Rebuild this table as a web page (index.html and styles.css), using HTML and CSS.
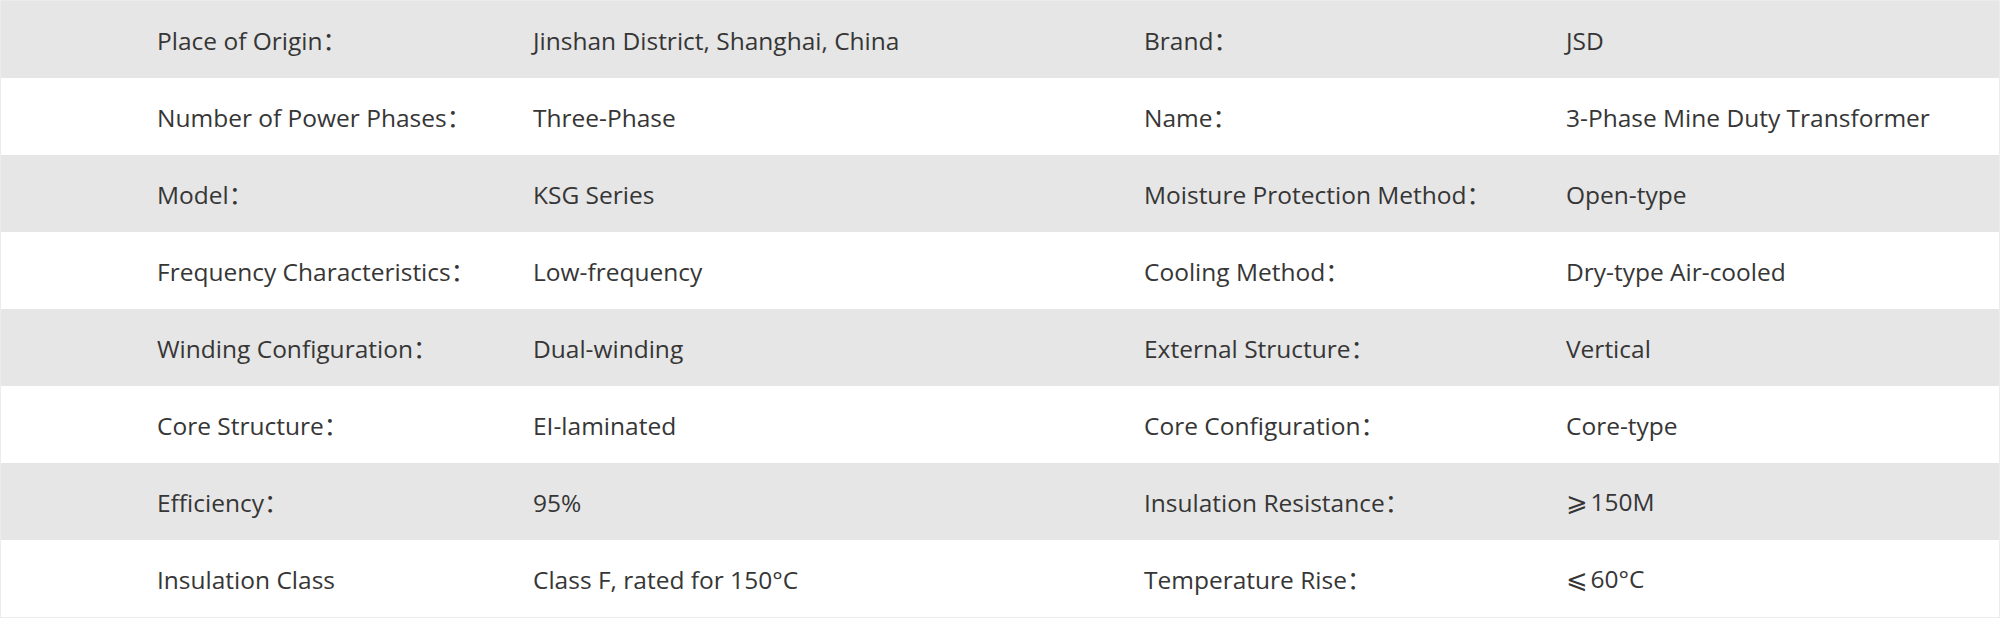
FILE: index.html
```html
<!DOCTYPE html>
<html lang="en">
<head>
<meta charset="utf-8">
<title>Specifications</title>
<link rel="stylesheet" href="styles.css">
</head>
<body>
<div class="specs">
  <div class="row alt">
    <div class="cell label first">Place of Origin：</div>
    <div class="cell">Jinshan District, Shanghai, China</div>
    <div class="cell label">Brand：</div>
    <div class="cell">JSD</div>
  </div>
  <div class="row">
    <div class="cell label first">Number of Power Phases：</div>
    <div class="cell">Three-Phase</div>
    <div class="cell label">Name：</div>
    <div class="cell">3-Phase Mine Duty Transformer</div>
  </div>
  <div class="row alt">
    <div class="cell label first">Model：</div>
    <div class="cell">KSG Series</div>
    <div class="cell label">Moisture Protection Method：</div>
    <div class="cell">Open-type</div>
  </div>
  <div class="row">
    <div class="cell label first">Frequency Characteristics：</div>
    <div class="cell">Low-frequency</div>
    <div class="cell label">Cooling Method：</div>
    <div class="cell">Dry-type Air-cooled</div>
  </div>
  <div class="row alt">
    <div class="cell label first">Winding Configuration：</div>
    <div class="cell">Dual-winding</div>
    <div class="cell label">External Structure：</div>
    <div class="cell">Vertical</div>
  </div>
  <div class="row">
    <div class="cell label first">Core Structure：</div>
    <div class="cell">EI-laminated</div>
    <div class="cell label">Core Configuration：</div>
    <div class="cell">Core-type</div>
  </div>
  <div class="row alt">
    <div class="cell label first">Efficiency：</div>
    <div class="cell">95%</div>
    <div class="cell label">Insulation Resistance：</div>
    <div class="cell"><span class="sym">⩾</span>150M</div>
  </div>
  <div class="row">
    <div class="cell label first">Insulation Class</div>
    <div class="cell">Class F, rated for 150°C</div>
    <div class="cell label">Temperature Rise：</div>
    <div class="cell"><span class="sym">⩽</span>60°C</div>
  </div>
</div>
</body>
</html>
```

FILE: styles.css
```css
html, body {
  margin: 0;
  padding: 0;
  background: #ffffff;
}

body {
  font-family: "Open Sans", "Noto Sans", "Noto Sans CJK SC", sans-serif;
  font-size: 24.5px;
  color: #363636;
}

.specs {
  width: 1998px;
  border: 1px solid #ececec;
}

.row {
  display: grid;
  grid-template-columns: 532px 611px 422px 1fr;
  align-items: center;
  height: 77px;
  background: #ffffff;
}

.row.alt {
  background: #e6e6e6;
}

.cell {
  white-space: nowrap;
  line-height: 1.2;
  padding-top: 2px;
}

.cell.first {
  padding-left: 156px;
}

.sym {
  font-family: "DejaVu Sans", "Noto Sans CJK SC", sans-serif;
  font-size: 1.05em;
  margin-right: 3px;
}
```
